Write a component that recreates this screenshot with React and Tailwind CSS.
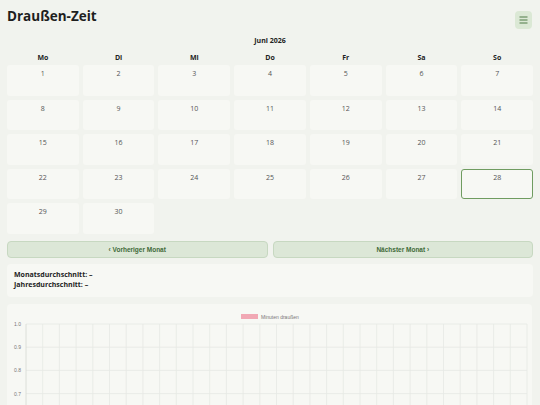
import React from "react";

const tage = ["Mo", "Di", "Mi", "Do", "Fr", "Sa", "So"];

function Diagramm() {
  const links = 19;
  const rechts = 520;
  const oben = 20;
  const schritt = 23.2;
  const spalten = 30;
  const breite = (rechts - links) / spalten;
  const yLabels = ["1.0", "0.9", "0.8", "0.7"];
  return (
    <svg width="525" height="101" className="block">
      {/* Legende */}
      <rect x="234" y="10" width="17" height="5" fill="#f1a8b4" />
      <text x="254" y="14.5" fontSize="5" fill="#777" fontFamily="Liberation Sans, Arial, sans-serif">
        Minuten draußen
      </text>
      {yLabels.map((l, i) => (
        <g key={l}>
          <line x1={links} x2={rechts} y1={oben + i * schritt} y2={oben + i * schritt} stroke="#e6e8e4" strokeWidth="0.8" />
          <text x="14" y={oben + i * schritt + 2} fontSize="5" fill="#777" textAnchor="end" fontFamily="Liberation Sans, Arial, sans-serif">
            {l}
          </text>
        </g>
      ))}
      {Array.from({ length: spalten + 1 }).map((_, i) => (
        <line
          key={i}
          x1={links + i * breite}
          x2={links + i * breite}
          y1={oben}
          y2="101"
          stroke={i === 0 ? "#d6d8d3" : "#e6e8e4"}
          strokeWidth="0.8"
        />
      ))}
    </svg>
  );
}

export default function App() {
  const zellen = Array.from({ length: 30 }, (_, i) => i + 1);
  return (
    <div className="h-[405px] overflow-hidden bg-[#f1f3ee] px-[7px] pt-[6px] font-['Open_Sans',sans-serif] text-[#222]">
      {/* Kopfzeile */}
      <div className="flex justify-between items-start">
        <h1 className="text-[13.5px] leading-[20px] font-bold text-[#1e1e1e]">Draußen-Zeit</h1>
        <button className="mt-[5px] mr-[1px] w-[17px] h-[18px] rounded-[4px] bg-[#dbe8d5] flex items-center justify-center">
          <svg width="9" height="8" viewBox="0 0 9 8">
            <path d="M0.5 1h8M0.5 4h8M0.5 7h8" stroke="#4f7a46" strokeWidth="1" />
          </svg>
        </button>
      </div>

      <p className="mt-[7px] text-center text-[7px] leading-[10px] font-bold">Juni 2026</p>

      <div className="mt-[7px] grid grid-cols-7 gap-x-[4px]">
        {tage.map((t) => (
          <p key={t} className="text-center text-[7px] leading-[10px] font-bold">
            {t}
          </p>
        ))}
      </div>

      <div className="mt-[2px] grid grid-cols-7 gap-x-[4px] gap-y-[4px]">
        {zellen.map((d) => (
          <div
            key={d}
            className={
              d === 28
                ? "h-[30.5px] rounded-[3px] bg-[#f7f8f4] border border-[#6f9c60] pt-[3px] text-center text-[7px] leading-[10px] text-[#555]"
                : "h-[30.5px] rounded-[3px] bg-[#f7f8f4] pt-[4px] text-center text-[7px] leading-[10px] text-[#555]"
            }
          >
            {d}
          </div>
        ))}
      </div>

      <div className="mt-[7.5px] flex gap-[5px]">
        <button className="flex-1 h-[17px] rounded-[4px] bg-[#dce7d7] border border-[#c7d8c1] text-[6.5px] font-bold text-[#3f6a37] font-['Liberation_Sans',Arial,sans-serif]">
          ‹ Vorheriger Monat
        </button>
        <button className="flex-1 h-[17px] rounded-[4px] bg-[#dce7d7] border border-[#c7d8c1] text-[6.5px] font-bold text-[#3f6a37] font-['Liberation_Sans',Arial,sans-serif]">
          Nächster Monat ›
        </button>
      </div>

      <div className="mt-[6px] rounded-[4px] bg-[#f7f8f4] px-[7px] pt-[6px] pb-[7px] text-[7px] leading-[10px] font-bold text-[#222]">
        <p>Monatsdurchschnitt: –</p>
        <p>Jahresdurchschnitt: –</p>
      </div>

      <div className="mt-[7px] mr-[1px] rounded-t-[4px] bg-[#f7f8f4] h-[101px] overflow-hidden">
        <Diagramm />
      </div>
    </div>
  );
}
